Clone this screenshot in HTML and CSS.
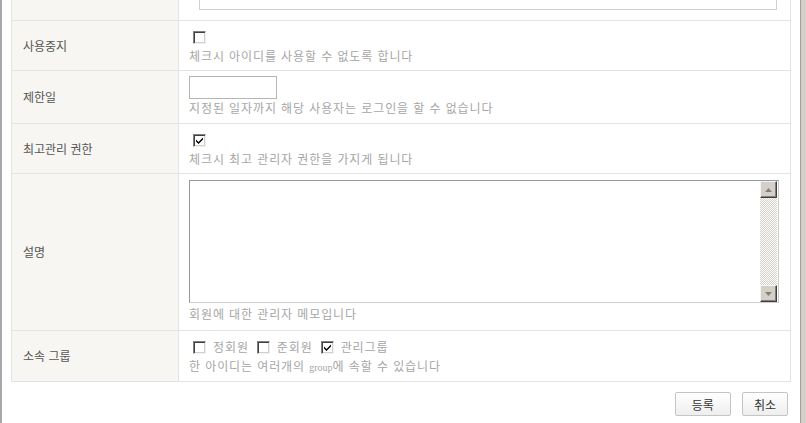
FILE: index.html
```html
<!DOCTYPE html>
<html lang="ko">
<head>
<meta charset="utf-8">
<link rel="stylesheet" href="styles.css">
</head>
<body>
<div class="page">
  <table class="form">
    <tr class="row-top">
      <th></th>
      <td><div class="cut-box"></div></td>
    </tr>
    <tr class="row-check">
      <th>사용중지</th>
      <td>
        <div class="ctrl"><span class="cb"></span></div>
        <div class="help">체크시 아이디를 사용할 수 없도록 합니다</div>
      </td>
    </tr>
    <tr class="row-date">
      <th>제한일</th>
      <td>
        <div class="ctrl-input"><input class="date" type="text"></div>
        <div class="help">지정된 일자까지 해당 사용자는 로그인을 할 수 없습니다</div>
      </td>
    </tr>
    <tr class="row-check">
      <th>최고관리 권한</th>
      <td>
        <div class="ctrl"><span class="cb checked"><svg viewBox="0 0 7 7" width="7" height="7"><path d="M0 2.5 L2.5 5 L7 0.5 L7 2.5 L2.5 7 L0 4.5 Z" fill="#000"/></svg></span></div>
        <div class="help">체크시 최고 관리자 권한을 가지게 됩니다</div>
      </td>
    </tr>
    <tr class="row-memo">
      <th>설명</th>
      <td>
        <div class="memo">
          <textarea class="memo-text"></textarea>
          <div class="sbar">
            <div class="sbtn"><svg viewBox="0 0 7 4" width="7" height="4"><path d="M3.5 0 L7 4 L0 4 Z" fill="#808080"/></svg></div>
            <div class="strack"></div>
            <div class="sbtn"><svg viewBox="0 0 7 4" width="7" height="4"><path d="M0 0 L7 0 L3.5 4 Z" fill="#808080"/></svg></div>
          </div>
        </div>
        <div class="help help-memo">회원에 대한 관리자 메모입니다</div>
      </td>
    </tr>
    <tr class="row-group">
      <th>소속 그룹</th>
      <td>
        <div class="ctrl groups">
          <label class="grp"><span class="cb"></span>정회원</label>
          <label class="grp"><span class="cb"></span>준회원</label>
          <label class="grp"><span class="cb checked"><svg viewBox="0 0 7 7" width="7" height="7"><path d="M0 2.5 L2.5 5 L7 0.5 L7 2.5 L2.5 7 L0 4.5 Z" fill="#000"/></svg></span>관리그룹</label>
        </div>
        <div class="help">한 아이디는 여러개의 <span class="latin">group</span>에 속할 수 있습니다</div>
      </td>
    </tr>
  </table>
  <div class="actions">
    <button class="btn btn-wide" type="button">등록</button>
    <button class="btn" type="button">취소</button>
  </div>
</div>
</body>
</html>
```

FILE: styles.css
```css
html, body {
  margin: 0;
  padding: 0;
}
body {
  background: #d4d0c8;
  font-family: "Noto Sans CJK KR", "Liberation Sans", sans-serif;
  font-size: 12px;
  color: #555;
  width: 806px;
  height: 423px;
  overflow: hidden;
}
.page {
  box-sizing: border-box;
  width: 801px;
  height: 423px;
  background: #fff;
  border-left: 2px solid #a8a8a8;
  border-right: 1px solid #a0a0a0;
  padding-left: 9px;
}
.form {
  border-collapse: collapse;
  width: 780px;
  table-layout: fixed;
}
.form th, .form td {
  border: 1px solid #e3e3e3;
  border-top: none;
  padding: 0;
  line-height: 18px;
}
.form tr + tr th, .form tr + tr td {
  border-top: 1px solid #e3e3e3;
}
.form th {
  width: 155px;
  background: #f7f6f2;
  font-weight: normal;
  text-align: left;
  padding-left: 11px;
  color: #555;
  font-size: 12px;
}
.form td {
  padding: 0 10px;
  vertical-align: top;
  overflow: hidden;
}
.row-top td, .row-top th {
  height: 20px;
}
.cut-box {
  margin-left: 10px;
  width: 576px;
  height: 9px;
  border: 1px solid #d0d0d0;
  border-top: none;
}
.row-check td {
  height: 43px;
  padding-top: 6px;
}
.row-date td {
  height: 47px;
  padding-top: 5px;
}
.row-memo td {
  height: 150px;
  padding-top: 6px;
}
.row-group td {
  height: 44px;
  padding-top: 6px;
}
.ctrl {
  height: 20px;
  display: flex;
  align-items: center;
}
.cb {
  box-sizing: border-box;
  display: inline-flex;
  align-items: center;
  justify-content: center;
  width: 13px;
  height: 13px;
  margin-left: 4px;
  background: #fff;
  border: 1px solid;
  border-color: #808080 #f0f0f0 #f0f0f0 #808080;
  box-shadow: inset 1px 1px 0 #404040, inset -1px -1px 0 #d4d0c8;
}
.help {
  color: #a6a6a6;
  line-height: 18px;
  height: 18px;
  white-space: nowrap;
  letter-spacing: 0.9px;
}
.ctrl-input {
  height: 23px;
}
.date {
  box-sizing: border-box;
  display: block;
  width: 88px;
  height: 23px;
  margin: 0;
  border: 1px solid #b5b5b5;
  padding: 0;
}
.memo {
  box-sizing: border-box;
  display: flex;
  width: 590px;
  height: 123px;
  border: 1px solid;
  border-color: #999 #ccc #ccc #999;
  background: #fff;
}
.memo-text {
  flex: 1;
  border: none;
  resize: none;
  margin: 0;
  padding: 0;
  outline: none;
}
.sbar {
  width: 17px;
  display: flex;
  flex-direction: column;
  margin-right: 1px;
}
.sbtn {
  box-sizing: border-box;
  width: 17px;
  height: 17px;
  background: #d4d0c8;
  border: 1px solid;
  border-color: #f4f4f4 #404040 #404040 #f4f4f4;
  box-shadow: inset -1px -1px 0 #808080;
  display: flex;
  align-items: center;
  justify-content: center;
}
.strack {
  flex: 1;
  background-color: #fff;
  background-image: repeating-conic-gradient(#d4d0c8 0 25%, #fff 0 50%);
  background-size: 2px 2px;
}
.help-memo {
  margin-top: 2px;
}
.grp {
  display: inline-flex;
  align-items: center;
  color: #a6a6a6;
  letter-spacing: 0.9px;
  margin-right: 8px;
}
.grp .cb {
  margin-right: 7px;
}
.grp + .grp .cb {
  margin-left: 0;
}
.latin {
  font-family: "Liberation Serif", serif;
  font-size: 10px;
  letter-spacing: 0;
}
.actions {
  display: flex;
  justify-content: flex-end;
  gap: 11px;
  width: 777px;
  margin-top: 10px;
}
.btn {
  box-sizing: border-box;
  height: 24px;
  padding: 0 11px;
  font-family: "Noto Sans CJK KR", sans-serif;
  font-size: 12px;
  color: #333;
  background: linear-gradient(#ffffff, #eeeeee);
  border: 1px solid #c4c4c4;
  border-radius: 2px;
}
.btn-wide {
  padding: 0 16px;
}
```
